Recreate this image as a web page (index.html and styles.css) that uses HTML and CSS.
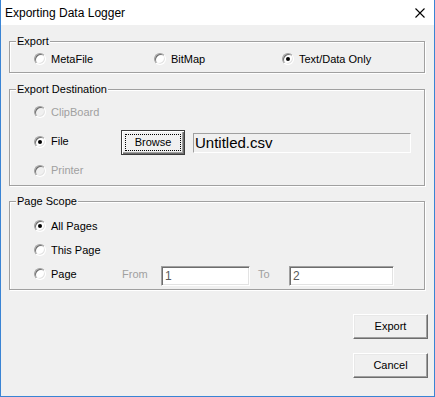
FILE: index.html
```html
<!DOCTYPE html>
<html>
<head>
<meta charset="utf-8">
<link rel="stylesheet" href="styles.css">
</head>
<body>
<div class="window">
  <div class="titlebar">
    <span class="title">Exporting Data Logger</span>
    <svg class="close" width="10" height="10" viewBox="0 0 10 10"><path d="M0.5 0.5 L9.5 9.5 M9.5 0.5 L0.5 9.5" stroke="#000" stroke-width="1.1" fill="none"/></svg>
  </div>
  <div class="client">
    <div class="group g-export">
      <span class="legend">Export</span>
      <div class="opt"><span class="radio"></span><span>MetaFile</span></div>
      <div class="opt"><span class="radio"></span><span>BitMap</span></div>
      <div class="opt"><span class="radio checked"></span><span>Text/Data Only</span></div>
    </div>

    <div class="group g-dest">
      <span class="legend">Export Destination</span>
      <div class="row"><div class="opt disabled"><span class="radio"></span><span>ClipBoard</span></div></div>
      <div class="row row-file">
        <div class="opt opt-file"><span class="radio checked"></span><span>File</span></div>
        <button class="btn btn-default btn-browse">Browse</button>
        <div class="textbox textbox-file">Untitled.csv</div>
      </div>
      <div class="row"><div class="opt disabled"><span class="radio"></span><span>Printer</span></div></div>
    </div>

    <div class="group g-scope">
      <span class="legend">Page Scope</span>
      <div class="row-s"><div class="opt"><span class="radio checked"></span><span>All Pages</span></div></div>
      <div class="row-s"><div class="opt"><span class="radio"></span><span>This Page</span></div></div>
      <div class="row-s">
        <div class="opt opt-page"><span class="radio"></span><span>Page</span></div>
        <span class="lbl lbl-from">From</span>
        <div class="edit edit-from">1</div>
        <span class="lbl lbl-to">To</span>
        <div class="edit edit-to">2</div>
      </div>
    </div>

    <div class="actions">
      <button class="btn btn-action">Export</button>
      <button class="btn btn-action">Cancel</button>
    </div>
  </div>
</div>
</body>
</html>
```

FILE: styles.css
```css
html, body {
  margin: 0;
  padding: 0;
  background: #f0f0f0;
}

body {
  font-family: "Liberation Sans", Arial, sans-serif;
  font-size: 11px;
  color: #000;
}

.window {
  width: 435px;
  height: 397px;
  box-sizing: border-box;
  border: 1px solid #3a84d4;
  border-top: 0;
  background: #f0f0f0;
  display: flex;
  flex-direction: column;
}

.titlebar {
  flex: none;
  height: 25px;
  background: #fff;
  display: flex;
  align-items: center;
  padding: 0 9px 0 4px;
}

.title {
  font-size: 12px;
  line-height: 14px;
  margin-top: 1px;
}

.close {
  margin-left: auto;
  margin-top: 1px;
  display: block;
}

.client {
  flex: 1;
  display: flex;
  flex-direction: column;
  padding: 16px 9px 0 8px;
}

.group {
  position: relative;
  box-sizing: border-box;
  border: 1px solid #a0a0a0;
  box-shadow: 1px 1px 0 #fff, inset 1px 1px 0 #fff;
  flex: none;
}

.legend {
  position: absolute;
  top: -7px;
  left: 6px;
  padding: 0 1px;
  line-height: 13px;
  background: #f0f0f0;
}

.opt {
  display: flex;
  align-items: center;
  height: 14px;
  line-height: 13px;
  white-space: nowrap;
}

.opt .radio {
  margin-right: 5px;
}

.opt.disabled {
  color: #a0a0a0;
}

.radio {
  position: relative;
  flex: none;
  width: 12px;
  height: 12px;
  box-sizing: border-box;
  border-radius: 50%;
  border: 1px solid;
  border-color: #a0a0a0 #fff #fff #a0a0a0;
  box-shadow: inset 1px 1px 0 #6d6d6d, inset -1px -1px 0 #e3e3e3;
  background: #fff;
}

.disabled .radio {
  background: #f0f0f0;
}

.radio.checked::after {
  content: "";
  position: absolute;
  left: 3px;
  top: 3px;
  width: 4px;
  height: 4px;
  border-radius: 50%;
  background: #000;
}

/* Export group */
.g-export {
  height: 32px;
  display: grid;
  grid-template-columns: 120px 128px auto;
  align-items: start;
  padding: 10px 0 0 24px;
}

/* Export destination */
.g-dest {
  margin-top: 16px;
  height: 97px;
  padding: 8px 0 0 24px;
  display: flex;
  flex-direction: column;
}

.row {
  height: 29px;
  display: flex;
  align-items: center;
}

.row-file {
  height: 30px;
}

.opt-file {
  width: 87px;
}

.btn {
  font-family: "Liberation Sans", Arial, sans-serif;
  font-size: 11px;
  color: #000;
  background: #f0f0f0;
  box-sizing: border-box;
  padding: 0;
  margin: 0;
  border: 1px solid;
  border-color: #fff #6d6d6d #6d6d6d #fff;
  box-shadow: inset -1px -1px 0 #a0a0a0, inset 1px 1px 0 #e8e8e8;
  line-height: 13px;
}

.btn-default {
  position: relative;
  border: 1px solid #3c3c3c;
  box-shadow: inset 1px 1px 0 #fff, inset -1px -1px 0 #6d6d6d, inset -2px -2px 0 #a0a0a0;
}

.btn-default::after {
  content: "";
  position: absolute;
  left: 3px;
  top: 3px;
  right: 3px;
  bottom: 3px;
  border: 1px dotted #000;
}

.btn-browse {
  width: 64px;
  height: 25px;
  flex: none;
  margin-top: 1px;
}

.textbox {
  box-sizing: border-box;
  border: 1px solid;
  border-color: #a0a0a0 #fff #fff #a0a0a0;
  background: #f0f0f0;
  white-space: nowrap;
}

.textbox-file {
  margin-left: 8px;
  width: 218px;
  height: 20px;
  font-size: 15px;
  line-height: 18px;
  padding-left: 1px;
  margin-top: 2px;
}

/* Page scope */
.g-scope {
  margin-top: 15px;
  height: 89px;
  padding: 12px 0 0 24px;
  display: flex;
  flex-direction: column;
}

.row-s {
  height: 24px;
  display: flex;
  align-items: center;
}

.opt-page {
  width: 88px;
}

.lbl {
  color: #a0a0a0;
  line-height: 13px;
  flex: none;
}

.lbl-from {
  width: 39px;
}

.lbl-to {
  width: 31px;
  margin-left: 8px;
}

.edit {
  box-sizing: border-box;
  height: 20px;
  background: #fff;
  border: 1px solid;
  border-color: #a0a0a0 #fff #fff #a0a0a0;
  box-shadow: inset 1px 1px 0 #6d6d6d, inset -1px -1px 0 #e3e3e3;
  padding-left: 3px;
  font-size: 12px;
  line-height: 18px;
  color: #5a5a5a;
  margin-top: 3px;
  flex: none;
}

.edit-from {
  width: 89px;
}

.edit-to {
  width: 105px;
}

.actions {
  margin-top: 24px;
  margin-right: -3px;
  display: flex;
  flex-direction: column;
  align-items: flex-end;
  gap: 14px;
}

.btn-action {
  width: 75px;
  height: 25px;
}
```
